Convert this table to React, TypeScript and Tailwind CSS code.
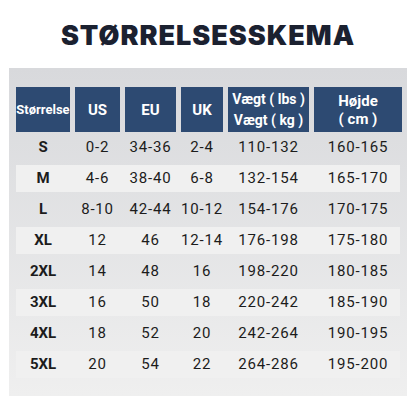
const cols = "grid grid-cols-[54px_45px_51px_42px_81px_88px] gap-x-[5px]";

const rows = [
	["S", "0-2", "34-36", "2-4", "110-132", "160-165"],
	["M", "4-6", "38-40", "6-8", "132-154", "165-170"],
	["L", "8-10", "42-44", "10-12", "154-176", "170-175"],
	["XL", "12", "46", "12-14", "176-198", "175-180"],
	["2XL", "14", "48", "16", "198-220", "180-185"],
	["3XL", "16", "50", "18", "220-242", "185-190"],
	["4XL", "18", "52", "20", "242-264", "190-195"],
	["5XL", "20", "54", "22", "264-286", "195-200"],
];

function HeadCell({ children }: { children: React.ReactNode }) {
	return (
		<div className="flex h-[45px] flex-col items-center justify-center bg-[#2d4a72] text-center text-[15px] font-bold leading-[20px] text-white">
			{children}
		</div>
	);
}

export default function App() {
	return (
		<div className="h-[416px] w-[416px] bg-white font-['Roboto',sans-serif] text-[#1c1c1c]">
			<h1 className="pt-[21px] text-center font-['Inter',sans-serif] text-[27px] font-black leading-[30px] tracking-[1px] text-[#1b2130]">
				STØRRELSESSKEMA
			</h1>
			<div className="mx-[9px] mt-[17px] h-[328px] bg-gradient-to-b from-[#d8d9dc] to-[#efefef] px-[7px] pt-[19px]">
				<div className={cols}>
					<HeadCell>
						<span className="text-[13px]">Størrelse</span>
					</HeadCell>
					<HeadCell>US</HeadCell>
					<HeadCell>EU</HeadCell>
					<HeadCell>UK</HeadCell>
					<HeadCell>
						<span className="text-[14px] leading-[21px]">Vægt ( lbs )</span>
						<span className="text-[14px] leading-[21px]">Vægt ( kg )</span>
					</HeadCell>
					<HeadCell>
						<span className="leading-[18px]">Højde</span>
						<span className="leading-[18px]">( cm )</span>
					</HeadCell>
				</div>
				<div>
					{rows.map((r, i) => (
						<div key={r[0]} className="py-[2px]">
							<div
								className={`${cols} h-[27px] items-center text-center text-[15px] tracking-[0.8px] ${
									i % 2 === 1 ? "bg-[#f0f0f0]" : ""
								}`}
							>
								{r.map((c, j) => (
									<span key={j} className={j === 0 ? "font-bold tracking-[0px]" : ""}>
										{c}
									</span>
								))}
							</div>
						</div>
					))}
				</div>
			</div>
		</div>
	);
}
